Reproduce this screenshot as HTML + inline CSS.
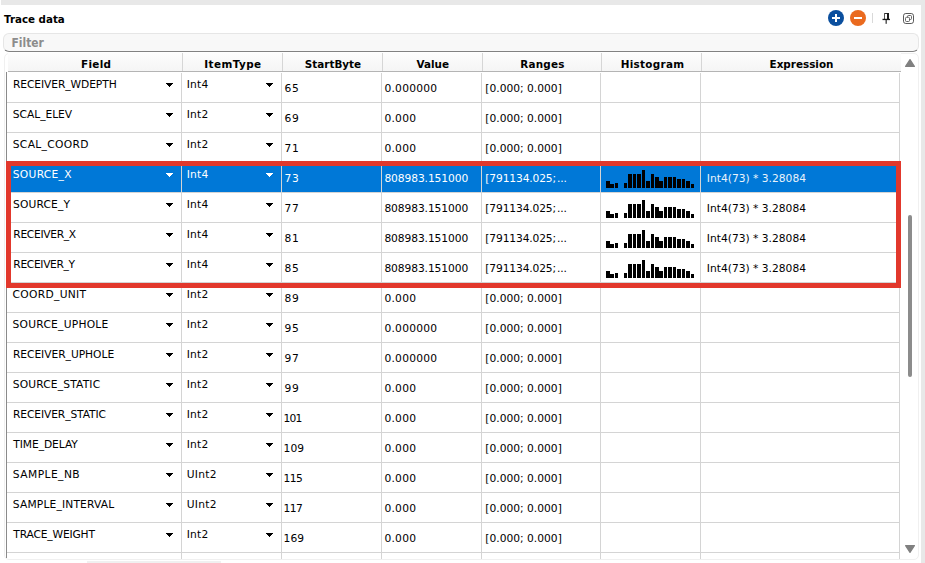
<!DOCTYPE html><html><head><meta charset="utf-8"><title>Trace data</title><style>
html,body{margin:0;padding:0}
body{width:925px;height:563px;overflow:hidden;background:#e8e8e8;position:relative;font-family:"DejaVu Sans","Liberation Sans",sans-serif;font-size:10.7px;color:#000}
.panel{position:absolute;left:0;top:5px;width:921px;height:558px;background:#fff}
.title{position:absolute;left:4px;top:12px;font-weight:bold;font-size:10.3px;line-height:14px;white-space:nowrap}
.filter{position:absolute;left:3px;top:33px;width:914px;height:17px;border:1px solid #e6e6e6;border-bottom:1px solid #828282;border-radius:6px;background:#f8f8f8;box-sizing:content-box}
.filter span{position:absolute;left:7.5px;top:1.7px;font-family:"DejaVu Sans Condensed","DejaVu Sans",sans-serif;font-weight:bold;font-size:11.9px;line-height:14px;color:#8c8c8c}
.frame{position:absolute;left:4px;top:53px;width:915px;height:507px;border:1px solid #f0f0f0;border-radius:5px;box-sizing:border-box;background:#fff}
.hdr{position:absolute;left:8px;top:53px;width:893px;height:18px;background:linear-gradient(#fdfdfd,#f5f5f5);border-bottom:1px solid #b4b4b4}
.hc{position:absolute;top:0;height:18px;line-height:23px;text-align:center;font-weight:bold;font-size:10.4px;font-family:"DejaVu Sans","Liberation Sans",sans-serif;white-space:nowrap}
.hs{position:absolute;top:0px;width:1px;height:18px;background:#d6d6d6}
.lb{position:absolute;left:6px;top:72px;width:1px;height:486px;background:#8a8a8a}
.vl{position:absolute;top:73px;width:1px;height:486px;background:#d4d4d4}
.hl{position:absolute;left:7px;width:893px;height:1px;background:#d4d4d4}
.t{position:absolute;white-space:nowrap;line-height:14px;height:14px}
.sel{position:absolute;left:7px;top:162px;width:890px;height:30px;background:#0078d7}
.red{position:absolute;left:6px;top:161px;width:885px;height:117px;border:5px solid #e2382c;box-sizing:content-box}
.w{color:#fff}
.arr{position:absolute;width:7px;height:4px;fill:#000}
.arr.w{fill:#fff}
.hist{position:absolute;fill:#000}
.thumb{position:absolute;left:908px;top:215px;width:4px;height:162px;border-radius:2px;background:#8c8c8c}
.tri{position:absolute;width:0;height:0;border-left:5px solid transparent;border-right:5px solid transparent}
</style></head><body>
<div class="panel"></div><div style="position:absolute;left:0;top:0;width:1px;height:5px;background:#fff"></div>
<div class="title">Trace data</div>
<svg style="position:absolute;left:826px;top:8px" width="92" height="20" viewBox="826 8 92 20">
<circle cx="836" cy="18" r="8" fill="#0b4f9e"/><rect x="832" y="17" width="8" height="2" fill="#fff"/><rect x="835" y="14" width="2" height="8" fill="#fff"/>
<circle cx="858" cy="18" r="8" fill="#ea6a1f"/><rect x="854" y="17" width="8" height="2" fill="#fff"/>
<rect x="872" y="13" width="1" height="10" fill="#d9d9d9"/>
<g fill="#1a1a1a"><rect x="884" y="13" width="5" height="1" fill="#333"/><rect x="884" y="13" width="1" height="6" fill="#555"/><rect x="887" y="13" width="2" height="6"/><rect x="882.5" y="18.8" width="7.5" height="1.3"/><rect x="885.6" y="19" width="1.1" height="4.8"/></g>
<rect x="903.5" y="13.5" width="10" height="10" rx="2.3" fill="none" stroke="#5a5a5a" stroke-width="1"/>
<rect x="907.5" y="15.5" width="4" height="4" rx="1" fill="#fff" stroke="#555" stroke-width="0.9"/>
<rect x="905.5" y="17.3" width="4" height="4.2" rx="1" fill="#fff" stroke="#555" stroke-width="0.9"/>
</svg>
<div class="filter"><span>Filter</span></div>
<div class="frame"></div>
<div class="hdr">
<div class="hc" style="left:0.7px;width:175px;letter-spacing:0.30px">Field</div>
<div class="hc" style="left:175.4px;width:99px;letter-spacing:0.45px">ItemType</div>
<div class="hc" style="left:275.5px;width:99px">StartByte</div>
<div class="hc" style="left:375.3px;width:99px">Value</div>
<div class="hc" style="left:475.4px;width:118px;letter-spacing:0.20px">Ranges</div>
<div class="hc" style="left:595.0px;width:99px;letter-spacing:0.30px">Histogram</div>
<div class="hc" style="left:694.0px;width:199px">Expression</div>
<div class="hs" style="left:174px"></div>
<div class="hs" style="left:274px"></div>
<div class="hs" style="left:374px"></div>
<div class="hs" style="left:474px"></div>
<div class="hs" style="left:593px"></div>
<div class="hs" style="left:693px"></div>
</div>
<div class="sel"></div>
<div class="lb"></div>
<div class="vl" style="left:181px"></div>
<div class="vl" style="left:281px"></div>
<div class="vl" style="left:381px"></div>
<div class="vl" style="left:481px"></div>
<div class="vl" style="left:600px"></div>
<div class="vl" style="left:700px"></div>
<div class="vl" style="left:899px"></div>
<div class="hl" style="top:102px"></div>
<div class="hl" style="top:132px"></div>
<div class="hl" style="top:162px"></div>
<div class="hl" style="top:192px"></div>
<div class="hl" style="top:222px"></div>
<div class="hl" style="top:252px"></div>
<div class="hl" style="top:282px"></div>
<div class="hl" style="top:312px"></div>
<div class="hl" style="top:342px"></div>
<div class="hl" style="top:372px"></div>
<div class="hl" style="top:402px"></div>
<div class="hl" style="top:432px"></div>
<div class="hl" style="top:462px"></div>
<div class="hl" style="top:492px"></div>
<div class="hl" style="top:522px"></div>
<div class="hl" style="top:552px"></div>
<div class="t" style="left:13.00px;top:77.7px;letter-spacing:-0.09px">RECEIVER_WDEPTH</div>
<svg class="arr" style="left:166px;top:83px" viewBox="0 0 7 4" shape-rendering="crispEdges"><rect x="0" y="0" width="7" height="1"/><rect x="1" y="1" width="5" height="1"/><rect x="2" y="2" width="3" height="1"/><rect x="3" y="3" width="1" height="1"/></svg>
<div class="t" style="left:186.7px;top:77.7px;letter-spacing:0.25px">Int4</div>
<svg class="arr" style="left:266px;top:83px" viewBox="0 0 7 4" shape-rendering="crispEdges"><rect x="0" y="0" width="7" height="1"/><rect x="1" y="1" width="5" height="1"/><rect x="2" y="2" width="3" height="1"/><rect x="3" y="3" width="1" height="1"/></svg>
<div class="t" style="left:284.5px;top:81.6px;letter-spacing:0.8px">65</div>
<div class="t" style="left:384.4px;top:81.6px;letter-spacing:0.25px">0.000000</div>
<div class="t" style="left:485.3px;top:81.6px">[0.000; 0.000]</div>
<div class="t" style="left:12.75px;top:107.7px;letter-spacing:-0.03px">SCAL_ELEV</div>
<svg class="arr" style="left:166px;top:113px" viewBox="0 0 7 4" shape-rendering="crispEdges"><rect x="0" y="0" width="7" height="1"/><rect x="1" y="1" width="5" height="1"/><rect x="2" y="2" width="3" height="1"/><rect x="3" y="3" width="1" height="1"/></svg>
<div class="t" style="left:186.7px;top:107.7px;letter-spacing:0.25px">Int2</div>
<svg class="arr" style="left:266px;top:113px" viewBox="0 0 7 4" shape-rendering="crispEdges"><rect x="0" y="0" width="7" height="1"/><rect x="1" y="1" width="5" height="1"/><rect x="2" y="2" width="3" height="1"/><rect x="3" y="3" width="1" height="1"/></svg>
<div class="t" style="left:284.5px;top:111.6px;letter-spacing:0.8px">69</div>
<div class="t" style="left:384.4px;top:111.6px;letter-spacing:0.25px">0.000</div>
<div class="t" style="left:485.3px;top:111.6px">[0.000; 0.000]</div>
<div class="t" style="left:12.75px;top:137.7px;letter-spacing:0.33px">SCAL_COORD</div>
<svg class="arr" style="left:166px;top:143px" viewBox="0 0 7 4" shape-rendering="crispEdges"><rect x="0" y="0" width="7" height="1"/><rect x="1" y="1" width="5" height="1"/><rect x="2" y="2" width="3" height="1"/><rect x="3" y="3" width="1" height="1"/></svg>
<div class="t" style="left:186.7px;top:137.7px;letter-spacing:0.25px">Int2</div>
<svg class="arr" style="left:266px;top:143px" viewBox="0 0 7 4" shape-rendering="crispEdges"><rect x="0" y="0" width="7" height="1"/><rect x="1" y="1" width="5" height="1"/><rect x="2" y="2" width="3" height="1"/><rect x="3" y="3" width="1" height="1"/></svg>
<div class="t" style="left:284.5px;top:141.6px;letter-spacing:0.8px">71</div>
<div class="t" style="left:384.4px;top:141.6px;letter-spacing:0.25px">0.000</div>
<div class="t" style="left:485.3px;top:141.6px">[0.000; 0.000]</div>
<div class="t w" style="left:12.80px;top:167.7px;letter-spacing:0.27px">SOURCE_X</div>
<svg class="arr w" style="left:166px;top:173px" viewBox="0 0 7 4" shape-rendering="crispEdges"><rect x="0" y="0" width="7" height="1"/><rect x="1" y="1" width="5" height="1"/><rect x="2" y="2" width="3" height="1"/><rect x="3" y="3" width="1" height="1"/></svg>
<div class="t w" style="left:186.7px;top:167.7px;letter-spacing:0.25px">Int4</div>
<svg class="arr w" style="left:266px;top:173px" viewBox="0 0 7 4" shape-rendering="crispEdges"><rect x="0" y="0" width="7" height="1"/><rect x="1" y="1" width="5" height="1"/><rect x="2" y="2" width="3" height="1"/><rect x="3" y="3" width="1" height="1"/></svg>
<div class="t w" style="left:284.5px;top:171.6px;letter-spacing:0.8px">73</div>
<div class="t w" style="left:384.4px;top:171.6px;letter-spacing:-0.10px">808983.151000</div>
<div class="t w" style="left:485.3px;top:171.6px;word-spacing:-2.3px;letter-spacing:-0.14px">[791134.025; ...</div>
<svg class="hist" style="left:600px;top:162px" width="100" height="30" viewBox="0 0 100 30" shape-rendering="crispEdges"><rect x="6" y="19" width="4" height="7"/><rect x="10" y="22" width="4" height="4"/><rect x="15" y="21" width="3" height="5"/><rect x="24" y="21" width="3" height="5"/><rect x="28" y="12" width="4" height="14"/><rect x="33" y="12" width="3" height="14"/><rect x="37" y="12" width="4" height="14"/><rect x="42" y="8" width="3" height="18"/><rect x="46" y="19" width="4" height="7"/><rect x="51" y="12" width="3" height="14"/><rect x="55" y="15" width="4" height="11"/><rect x="59" y="19" width="4" height="7"/><rect x="64" y="15" width="3" height="11"/><rect x="68" y="15" width="4" height="11"/><rect x="73" y="15" width="3" height="11"/><rect x="77" y="17" width="4" height="9"/><rect x="82" y="17" width="3" height="9"/><rect x="86" y="19" width="4" height="7"/><rect x="91" y="22" width="3" height="4"/></svg>
<div class="t" style="left:706.8px;top:171.6px;color:#eaf3fb">Int4(73) * 3.28084</div>
<div class="t" style="left:13.00px;top:197.7px;letter-spacing:0.14px">SOURCE_Y</div>
<svg class="arr" style="left:166px;top:203px" viewBox="0 0 7 4" shape-rendering="crispEdges"><rect x="0" y="0" width="7" height="1"/><rect x="1" y="1" width="5" height="1"/><rect x="2" y="2" width="3" height="1"/><rect x="3" y="3" width="1" height="1"/></svg>
<div class="t" style="left:186.7px;top:197.7px;letter-spacing:0.25px">Int4</div>
<svg class="arr" style="left:266px;top:203px" viewBox="0 0 7 4" shape-rendering="crispEdges"><rect x="0" y="0" width="7" height="1"/><rect x="1" y="1" width="5" height="1"/><rect x="2" y="2" width="3" height="1"/><rect x="3" y="3" width="1" height="1"/></svg>
<div class="t" style="left:284.5px;top:201.6px;letter-spacing:0.8px">77</div>
<div class="t" style="left:384.4px;top:201.6px;letter-spacing:-0.10px">808983.151000</div>
<div class="t" style="left:485.3px;top:201.6px;word-spacing:-2.3px;letter-spacing:-0.14px">[791134.025; ...</div>
<svg class="hist" style="left:600px;top:192px" width="100" height="30" viewBox="0 0 100 30" shape-rendering="crispEdges"><rect x="6" y="19" width="4" height="7"/><rect x="10" y="22" width="4" height="4"/><rect x="15" y="21" width="3" height="5"/><rect x="24" y="21" width="3" height="5"/><rect x="28" y="12" width="4" height="14"/><rect x="33" y="12" width="3" height="14"/><rect x="37" y="12" width="4" height="14"/><rect x="42" y="8" width="3" height="18"/><rect x="46" y="19" width="4" height="7"/><rect x="51" y="12" width="3" height="14"/><rect x="55" y="15" width="4" height="11"/><rect x="59" y="19" width="4" height="7"/><rect x="64" y="15" width="3" height="11"/><rect x="68" y="15" width="4" height="11"/><rect x="73" y="15" width="3" height="11"/><rect x="77" y="17" width="4" height="9"/><rect x="82" y="17" width="3" height="9"/><rect x="86" y="19" width="4" height="7"/><rect x="91" y="22" width="3" height="4"/></svg>
<div class="t" style="left:706.8px;top:201.6px">Int4(73) * 3.28084</div>
<div class="t" style="left:13.30px;top:227.7px;letter-spacing:-0.32px">RECEIVER_X</div>
<svg class="arr" style="left:166px;top:233px" viewBox="0 0 7 4" shape-rendering="crispEdges"><rect x="0" y="0" width="7" height="1"/><rect x="1" y="1" width="5" height="1"/><rect x="2" y="2" width="3" height="1"/><rect x="3" y="3" width="1" height="1"/></svg>
<div class="t" style="left:186.7px;top:227.7px;letter-spacing:0.25px">Int4</div>
<svg class="arr" style="left:266px;top:233px" viewBox="0 0 7 4" shape-rendering="crispEdges"><rect x="0" y="0" width="7" height="1"/><rect x="1" y="1" width="5" height="1"/><rect x="2" y="2" width="3" height="1"/><rect x="3" y="3" width="1" height="1"/></svg>
<div class="t" style="left:284.5px;top:231.6px;letter-spacing:0.8px">81</div>
<div class="t" style="left:384.4px;top:231.6px;letter-spacing:-0.10px">808983.151000</div>
<div class="t" style="left:485.3px;top:231.6px;word-spacing:-2.3px;letter-spacing:-0.14px">[791134.025; ...</div>
<svg class="hist" style="left:600px;top:222px" width="100" height="30" viewBox="0 0 100 30" shape-rendering="crispEdges"><rect x="6" y="19" width="4" height="7"/><rect x="10" y="22" width="4" height="4"/><rect x="15" y="21" width="3" height="5"/><rect x="24" y="21" width="3" height="5"/><rect x="28" y="12" width="4" height="14"/><rect x="33" y="12" width="3" height="14"/><rect x="37" y="12" width="4" height="14"/><rect x="42" y="8" width="3" height="18"/><rect x="46" y="19" width="4" height="7"/><rect x="51" y="12" width="3" height="14"/><rect x="55" y="15" width="4" height="11"/><rect x="59" y="19" width="4" height="7"/><rect x="64" y="15" width="3" height="11"/><rect x="68" y="15" width="4" height="11"/><rect x="73" y="15" width="3" height="11"/><rect x="77" y="17" width="4" height="9"/><rect x="82" y="17" width="3" height="9"/><rect x="86" y="19" width="4" height="7"/><rect x="91" y="22" width="3" height="4"/></svg>
<div class="t" style="left:706.8px;top:231.6px">Int4(73) * 3.28084</div>
<div class="t" style="left:13.30px;top:257.7px;letter-spacing:-0.34px">RECEIVER_Y</div>
<svg class="arr" style="left:166px;top:263px" viewBox="0 0 7 4" shape-rendering="crispEdges"><rect x="0" y="0" width="7" height="1"/><rect x="1" y="1" width="5" height="1"/><rect x="2" y="2" width="3" height="1"/><rect x="3" y="3" width="1" height="1"/></svg>
<div class="t" style="left:186.7px;top:257.7px;letter-spacing:0.25px">Int4</div>
<svg class="arr" style="left:266px;top:263px" viewBox="0 0 7 4" shape-rendering="crispEdges"><rect x="0" y="0" width="7" height="1"/><rect x="1" y="1" width="5" height="1"/><rect x="2" y="2" width="3" height="1"/><rect x="3" y="3" width="1" height="1"/></svg>
<div class="t" style="left:284.5px;top:261.6px;letter-spacing:0.8px">85</div>
<div class="t" style="left:384.4px;top:261.6px;letter-spacing:-0.10px">808983.151000</div>
<div class="t" style="left:485.3px;top:261.6px;word-spacing:-2.3px;letter-spacing:-0.14px">[791134.025; ...</div>
<svg class="hist" style="left:600px;top:252px" width="100" height="30" viewBox="0 0 100 30" shape-rendering="crispEdges"><rect x="6" y="19" width="4" height="7"/><rect x="10" y="22" width="4" height="4"/><rect x="15" y="21" width="3" height="5"/><rect x="24" y="21" width="3" height="5"/><rect x="28" y="12" width="4" height="14"/><rect x="33" y="12" width="3" height="14"/><rect x="37" y="12" width="4" height="14"/><rect x="42" y="8" width="3" height="18"/><rect x="46" y="19" width="4" height="7"/><rect x="51" y="12" width="3" height="14"/><rect x="55" y="15" width="4" height="11"/><rect x="59" y="19" width="4" height="7"/><rect x="64" y="15" width="3" height="11"/><rect x="68" y="15" width="4" height="11"/><rect x="73" y="15" width="3" height="11"/><rect x="77" y="17" width="4" height="9"/><rect x="82" y="17" width="3" height="9"/><rect x="86" y="19" width="4" height="7"/><rect x="91" y="22" width="3" height="4"/></svg>
<div class="t" style="left:706.8px;top:261.6px">Int4(73) * 3.28084</div>
<div class="t" style="left:12.60px;top:287.7px;letter-spacing:0.30px">COORD_UNIT</div>
<svg class="arr" style="left:166px;top:293px" viewBox="0 0 7 4" shape-rendering="crispEdges"><rect x="0" y="0" width="7" height="1"/><rect x="1" y="1" width="5" height="1"/><rect x="2" y="2" width="3" height="1"/><rect x="3" y="3" width="1" height="1"/></svg>
<div class="t" style="left:186.7px;top:287.7px;letter-spacing:0.25px">Int2</div>
<svg class="arr" style="left:266px;top:293px" viewBox="0 0 7 4" shape-rendering="crispEdges"><rect x="0" y="0" width="7" height="1"/><rect x="1" y="1" width="5" height="1"/><rect x="2" y="2" width="3" height="1"/><rect x="3" y="3" width="1" height="1"/></svg>
<div class="t" style="left:284.5px;top:291.6px;letter-spacing:0.8px">89</div>
<div class="t" style="left:384.4px;top:291.6px;letter-spacing:0.25px">0.000</div>
<div class="t" style="left:485.3px;top:291.6px">[0.000; 0.000]</div>
<div class="t" style="left:12.60px;top:317.7px;letter-spacing:0.23px">SOURCE_UPHOLE</div>
<svg class="arr" style="left:166px;top:323px" viewBox="0 0 7 4" shape-rendering="crispEdges"><rect x="0" y="0" width="7" height="1"/><rect x="1" y="1" width="5" height="1"/><rect x="2" y="2" width="3" height="1"/><rect x="3" y="3" width="1" height="1"/></svg>
<div class="t" style="left:186.7px;top:317.7px;letter-spacing:0.25px">Int2</div>
<svg class="arr" style="left:266px;top:323px" viewBox="0 0 7 4" shape-rendering="crispEdges"><rect x="0" y="0" width="7" height="1"/><rect x="1" y="1" width="5" height="1"/><rect x="2" y="2" width="3" height="1"/><rect x="3" y="3" width="1" height="1"/></svg>
<div class="t" style="left:284.5px;top:321.6px;letter-spacing:0.8px">95</div>
<div class="t" style="left:384.4px;top:321.6px;letter-spacing:0.25px">0.000000</div>
<div class="t" style="left:485.3px;top:321.6px">[0.000; 0.000]</div>
<div class="t" style="left:12.90px;top:347.7px;letter-spacing:-0.04px">RECEIVER_UPHOLE</div>
<svg class="arr" style="left:166px;top:353px" viewBox="0 0 7 4" shape-rendering="crispEdges"><rect x="0" y="0" width="7" height="1"/><rect x="1" y="1" width="5" height="1"/><rect x="2" y="2" width="3" height="1"/><rect x="3" y="3" width="1" height="1"/></svg>
<div class="t" style="left:186.7px;top:347.7px;letter-spacing:0.25px">Int2</div>
<svg class="arr" style="left:266px;top:353px" viewBox="0 0 7 4" shape-rendering="crispEdges"><rect x="0" y="0" width="7" height="1"/><rect x="1" y="1" width="5" height="1"/><rect x="2" y="2" width="3" height="1"/><rect x="3" y="3" width="1" height="1"/></svg>
<div class="t" style="left:284.5px;top:351.6px;letter-spacing:0.8px">97</div>
<div class="t" style="left:384.4px;top:351.6px;letter-spacing:0.25px">0.000000</div>
<div class="t" style="left:485.3px;top:351.6px">[0.000; 0.000]</div>
<div class="t" style="left:12.75px;top:377.7px;letter-spacing:0.15px">SOURCE_STATIC</div>
<svg class="arr" style="left:166px;top:383px" viewBox="0 0 7 4" shape-rendering="crispEdges"><rect x="0" y="0" width="7" height="1"/><rect x="1" y="1" width="5" height="1"/><rect x="2" y="2" width="3" height="1"/><rect x="3" y="3" width="1" height="1"/></svg>
<div class="t" style="left:186.7px;top:377.7px;letter-spacing:0.25px">Int2</div>
<svg class="arr" style="left:266px;top:383px" viewBox="0 0 7 4" shape-rendering="crispEdges"><rect x="0" y="0" width="7" height="1"/><rect x="1" y="1" width="5" height="1"/><rect x="2" y="2" width="3" height="1"/><rect x="3" y="3" width="1" height="1"/></svg>
<div class="t" style="left:284.5px;top:381.6px;letter-spacing:0.8px">99</div>
<div class="t" style="left:384.4px;top:381.6px;letter-spacing:0.25px">0.000</div>
<div class="t" style="left:485.3px;top:381.6px">[0.000; 0.000]</div>
<div class="t" style="left:13.00px;top:407.7px;letter-spacing:-0.11px">RECEIVER_STATIC</div>
<svg class="arr" style="left:166px;top:413px" viewBox="0 0 7 4" shape-rendering="crispEdges"><rect x="0" y="0" width="7" height="1"/><rect x="1" y="1" width="5" height="1"/><rect x="2" y="2" width="3" height="1"/><rect x="3" y="3" width="1" height="1"/></svg>
<div class="t" style="left:186.7px;top:407.7px;letter-spacing:0.25px">Int2</div>
<svg class="arr" style="left:266px;top:413px" viewBox="0 0 7 4" shape-rendering="crispEdges"><rect x="0" y="0" width="7" height="1"/><rect x="1" y="1" width="5" height="1"/><rect x="2" y="2" width="3" height="1"/><rect x="3" y="3" width="1" height="1"/></svg>
<div class="t" style="left:283.6px;top:411.6px;letter-spacing:-0.8px">101</div>
<div class="t" style="left:384.4px;top:411.6px;letter-spacing:0.25px">0.000</div>
<div class="t" style="left:485.3px;top:411.6px">[0.000; 0.000]</div>
<div class="t" style="left:13.30px;top:437.7px;letter-spacing:-0.07px">TIME_DELAY</div>
<svg class="arr" style="left:166px;top:443px" viewBox="0 0 7 4" shape-rendering="crispEdges"><rect x="0" y="0" width="7" height="1"/><rect x="1" y="1" width="5" height="1"/><rect x="2" y="2" width="3" height="1"/><rect x="3" y="3" width="1" height="1"/></svg>
<div class="t" style="left:186.7px;top:437.7px;letter-spacing:0.25px">Int2</div>
<svg class="arr" style="left:266px;top:443px" viewBox="0 0 7 4" shape-rendering="crispEdges"><rect x="0" y="0" width="7" height="1"/><rect x="1" y="1" width="5" height="1"/><rect x="2" y="2" width="3" height="1"/><rect x="3" y="3" width="1" height="1"/></svg>
<div class="t" style="left:283.5px;top:441.6px;letter-spacing:0.1px">109</div>
<div class="t" style="left:384.4px;top:441.6px;letter-spacing:0.25px">0.000</div>
<div class="t" style="left:485.3px;top:441.6px">[0.000; 0.000]</div>
<div class="t" style="left:12.80px;top:467.7px;letter-spacing:0.44px">SAMPLE_NB</div>
<svg class="arr" style="left:166px;top:473px" viewBox="0 0 7 4" shape-rendering="crispEdges"><rect x="0" y="0" width="7" height="1"/><rect x="1" y="1" width="5" height="1"/><rect x="2" y="2" width="3" height="1"/><rect x="3" y="3" width="1" height="1"/></svg>
<div class="t" style="left:186.7px;top:467.7px;letter-spacing:0.25px">UInt2</div>
<svg class="arr" style="left:266px;top:473px" viewBox="0 0 7 4" shape-rendering="crispEdges"><rect x="0" y="0" width="7" height="1"/><rect x="1" y="1" width="5" height="1"/><rect x="2" y="2" width="3" height="1"/><rect x="3" y="3" width="1" height="1"/></svg>
<div class="t" style="left:283.5px;top:471.6px;letter-spacing:-0.5px">115</div>
<div class="t" style="left:384.4px;top:471.6px;letter-spacing:0.25px">0.000</div>
<div class="t" style="left:485.3px;top:471.6px">[0.000; 0.000]</div>
<div class="t" style="left:12.80px;top:497.7px;letter-spacing:0.16px">SAMPLE_INTERVAL</div>
<svg class="arr" style="left:166px;top:503px" viewBox="0 0 7 4" shape-rendering="crispEdges"><rect x="0" y="0" width="7" height="1"/><rect x="1" y="1" width="5" height="1"/><rect x="2" y="2" width="3" height="1"/><rect x="3" y="3" width="1" height="1"/></svg>
<div class="t" style="left:186.7px;top:497.7px;letter-spacing:0.25px">UInt2</div>
<svg class="arr" style="left:266px;top:503px" viewBox="0 0 7 4" shape-rendering="crispEdges"><rect x="0" y="0" width="7" height="1"/><rect x="1" y="1" width="5" height="1"/><rect x="2" y="2" width="3" height="1"/><rect x="3" y="3" width="1" height="1"/></svg>
<div class="t" style="left:283.5px;top:501.6px;letter-spacing:-0.5px">117</div>
<div class="t" style="left:384.4px;top:501.6px;letter-spacing:0.25px">0.000</div>
<div class="t" style="left:485.3px;top:501.6px">[0.000; 0.000]</div>
<div class="t" style="left:13.30px;top:527.7px;letter-spacing:-0.17px">TRACE_WEIGHT</div>
<svg class="arr" style="left:166px;top:533px" viewBox="0 0 7 4" shape-rendering="crispEdges"><rect x="0" y="0" width="7" height="1"/><rect x="1" y="1" width="5" height="1"/><rect x="2" y="2" width="3" height="1"/><rect x="3" y="3" width="1" height="1"/></svg>
<div class="t" style="left:186.7px;top:527.7px;letter-spacing:0.25px">Int2</div>
<svg class="arr" style="left:266px;top:533px" viewBox="0 0 7 4" shape-rendering="crispEdges"><rect x="0" y="0" width="7" height="1"/><rect x="1" y="1" width="5" height="1"/><rect x="2" y="2" width="3" height="1"/><rect x="3" y="3" width="1" height="1"/></svg>
<div class="t" style="left:283.5px;top:531.6px;letter-spacing:0.1px">169</div>
<div class="t" style="left:384.4px;top:531.6px;letter-spacing:0.25px">0.000</div>
<div class="t" style="left:485.3px;top:531.6px">[0.000; 0.000]</div>
<div class="red"></div>
<svg style="position:absolute;left:903px;top:56px" width="14" height="14" viewBox="903 56 14 14"><path d="M910 59.6 L914.4 66.4 H905.6 Z" fill="#808080" stroke="#808080" stroke-width="1.2" stroke-linejoin="round"/></svg>
<svg style="position:absolute;left:903px;top:542px" width="14" height="14" viewBox="903 542 14 14"><path d="M910 552.4 L914.4 545.6 H905.6 Z" fill="#808080" stroke="#808080" stroke-width="1.2" stroke-linejoin="round"/></svg>
<div class="thumb"></div>
<div style="position:absolute;left:87px;top:561px;width:134px;height:2px;background:#f0f0f0"></div>
</body></html>
